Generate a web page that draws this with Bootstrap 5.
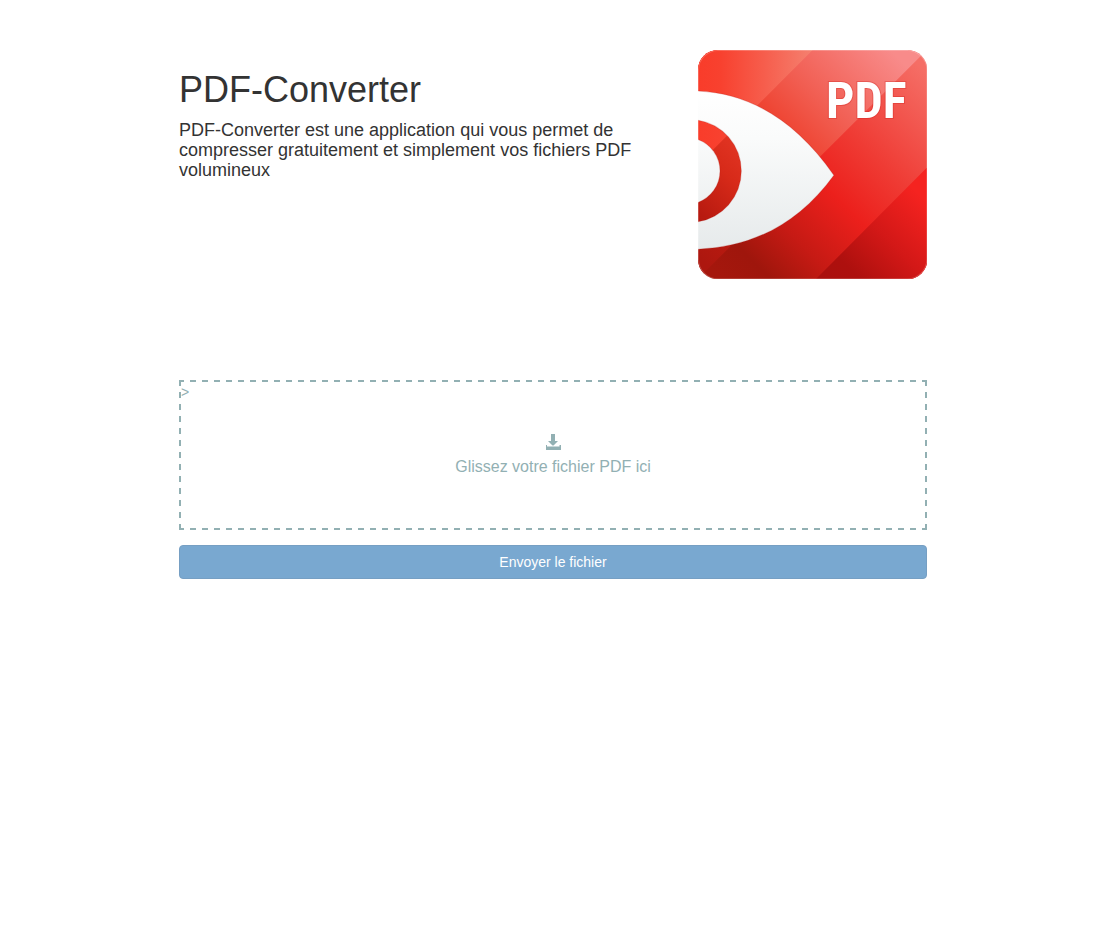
<!DOCTYPE html>
<html lang="fr">
<head>
<meta charset="utf-8">
<meta name="viewport" content="width=device-width, initial-scale=1">
<title>PDF-Converter</title>
<link href="https://cdn.jsdelivr.net/npm/bootstrap@5.3.0/dist/css/bootstrap.min.css" rel="stylesheet">
<style>
  body { font-family: "Liberation Sans", Arial, sans-serif; font-size: 14px; line-height: 20px; color: #333; background: #fff; }
  .page { max-width: 778px; padding: 50px 15px; }
  .intro { --bs-gutter-x: 30px; margin-bottom: 101px; }
  .intro h1 { font-size: 36px; line-height: 40px; font-weight: 400; margin: 20px 0 10px; }
  .intro h2 { font-size: 18px; line-height: 20px; font-weight: 400; margin: 0; }
  .logo-name { font-family: "Roboto Condensed", "Liberation Sans Narrow", "Liberation Sans", sans-serif; font-size: 50px; font-weight: 700; }
  /* dashed frame: 6px dashes, 6px gaps, centred on every side */
  .dropzone {
    --dash: transparent 3px, #92b0b3 3px, #92b0b3 9px, transparent 9px;
    min-height: 150px; border: 2px solid transparent; color: #92b0b3; margin-bottom: 15px;
    background:
      linear-gradient(90deg, var(--dash)) center top / 12px 2px repeat-x border-box,
      linear-gradient(90deg, var(--dash)) center bottom / 12px 2px repeat-x border-box,
      linear-gradient(180deg, var(--dash)) left center / 2px 12px repeat-y border-box,
      linear-gradient(180deg, var(--dash)) right center / 2px 12px repeat-y border-box;
  }
  .dropzone label { font-size: 16px; line-height: 24px; gap: 5px; padding-bottom: 17px; cursor: pointer; }
  .btn-send { --bs-btn-font-size: 14px; --bs-btn-line-height: 20px; --bs-btn-padding-y: 6px; --bs-btn-border-radius: 4px;
    --bs-btn-disabled-color: #fff; --bs-btn-disabled-bg: #337ab7; --bs-btn-disabled-border-color: #2e6da4; line-height: 20px; }
</style>
</head>
<body>
<main class="container-fluid page">
  <header class="row intro">
    <div class="col-8">
      <h1>PDF-Converter</h1>
      <h2>PDF-Converter est une application qui vous permet de compresser gratuitement et simplement vos fichiers PDF volumineux</h2>
    </div>
    <div class="col-4">
      <svg class="d-block w-100" viewBox="0 0 229 229" role="img" aria-label="PDF">
        <defs>
          <clipPath id="tile"><rect width="229" height="229" rx="20"/></clipPath>
          <linearGradient id="bandA" gradientUnits="userSpaceOnUse" x1="0" y1="0" x2="114" y2="0">
            <stop offset="0" stop-color="#f93c2a"/><stop offset=".2" stop-color="#f8412f"/><stop offset=".6" stop-color="#f65f4e"/><stop offset="1" stop-color="#f5806f"/>
          </linearGradient>
          <linearGradient id="bandB" gradientUnits="userSpaceOnUse" x1="0" y1="229" x2="229" y2="0">
            <stop offset=".05" stop-color="#ad170f"/><stop offset=".15" stop-color="#b81a10"/><stop offset=".29" stop-color="#d72a19"/><stop offset=".5" stop-color="#ee412e"/><stop offset=".65" stop-color="#f15d51"/><stop offset=".92" stop-color="#f88b8a"/>
          </linearGradient>
          <linearGradient id="bandC" gradientUnits="userSpaceOnUse" x1="0" y1="229" x2="229" y2="0">
            <stop offset=".05" stop-color="#a5170d"/><stop offset=".16" stop-color="#9f160c"/><stop offset=".3" stop-color="#c61a14"/><stop offset=".48" stop-color="#ec201c"/><stop offset=".65" stop-color="#ef3b34"/><stop offset=".95" stop-color="#f56e66"/>
          </linearGradient>
          <linearGradient id="bandD" gradientUnits="userSpaceOnUse" x1="119" y1="229" x2="229" y2="119">
            <stop offset="0" stop-color="#a9100d"/><stop offset=".2" stop-color="#ae100e"/><stop offset=".5" stop-color="#d31817"/><stop offset=".85" stop-color="#f52320"/><stop offset="1" stop-color="#f52320"/>
          </linearGradient>
          <linearGradient id="eye" gradientUnits="userSpaceOnUse" x1="0" y1="41" x2="0" y2="199">
            <stop offset="0" stop-color="#fff"/><stop offset=".3" stop-color="#fafbfb"/><stop offset="1" stop-color="#e6eaeb"/>
          </linearGradient>
        </defs>
        <g clip-path="url(#tile)">
          <path fill="url(#bandC)" d="M0 0H229V229H0z"/>
          <path fill="url(#bandB)" d="M0 0H228.500L0 228.500z"/>
          <path fill="url(#bandA)" d="M0 0H114.500L0 114.500z"/>
          <path fill="url(#bandD)" d="M229 117V229H117.500z"/>
          <path fill="url(#eye)" stroke="#b01410" stroke-opacity=".25" d="M-1 41C50 43 96 68 135.700 125C98 177 50 197 -1 199V171.700A51.400 51.400 0 0 0 -1 69.900z"/>
          <path fill="url(#eye)" stroke="#b01410" stroke-opacity=".25" d="M-1 89A33.500 33.500 0 0 1 -1 152.600z"/>
          <rect x=".5" y=".5" width="228" height="228" rx="19.500" fill="none" stroke="#fff" stroke-opacity=".22"/>
        </g>
        <text class="logo-name" x="168" y="68" text-anchor="middle" fill="#fff" stroke="#c91c18" stroke-opacity=".3" stroke-width="2" paint-order="stroke">PDF</text>
      </svg>
    </div>
  </header>

  <form>
    <div class="dropzone d-flex flex-column">
      <span>&gt;</span>
      <input class="visually-hidden" type="file" id="pdf-file" accept="application/pdf">
      <label for="pdf-file" class="flex-grow-1 d-flex flex-column align-items-center justify-content-center">
        <svg width="16" height="16" viewBox="0 0 16 16" fill="currentColor" aria-hidden="true">
          <path d="M6 0H10V7H13L8.500 11.500H7.500L3 7H6z"/>
          <path d="M1 11H2V12.500H14.500V11H16V16H1z"/>
        </svg>
        <span>Glissez votre fichier PDF ici</span>
      </label>
    </div>
    <button type="submit" class="btn btn-primary btn-send w-100" disabled>Envoyer le fichier</button>
  </form>
</main>
<script src="https://cdn.jsdelivr.net/npm/bootstrap@5.3.0/dist/js/bootstrap.bundle.min.js"></script>
</body>
</html>
